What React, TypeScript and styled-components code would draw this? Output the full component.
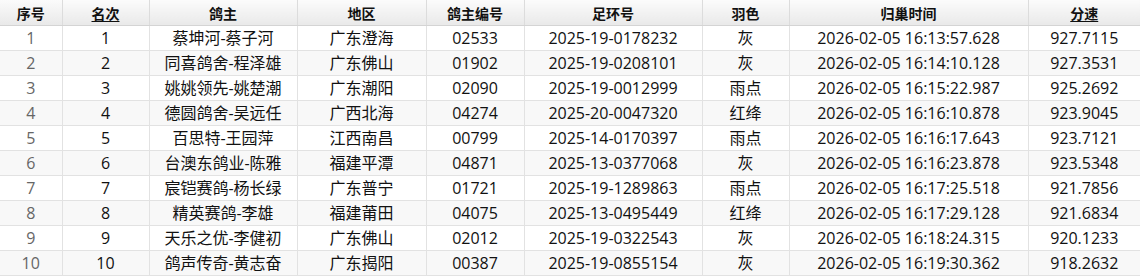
import styled, { createGlobalStyle } from "styled-components";

const GlobalStyle = createGlobalStyle`
  body {
    margin: 0;
    background: #ffffff;
  }
`;

const Table = styled.table`
  width: 1140px;
  table-layout: fixed;
  border-collapse: collapse;
  font-family: "Open Sans", "Noto Sans CJK SC", sans-serif;
  color: #111111;
`;

const Col = styled.col<{ $w: number }>`
  width: ${(p) => p.$w}px;
`;

const HeadCell = styled.th<{ $sortable?: boolean }>`
  height: 25px;
  padding: 0;
  font-size: 14px;
  font-weight: bold;
  color: #111111;
  text-align: center;
  background: linear-gradient(#fbfbfb, #e9e9e9);
  border-right: 1px solid #dcdcdc;
  border-bottom: 1px solid #d4d4d4;
  text-decoration: ${(p) => (p.$sortable ? "underline" : "none")};
  text-underline-offset: 2px;
  &:last-child {
    border-right: none;
  }
`;

const Row = styled.tr`
  &:nth-child(even) {
    background: #f8f8f8;
  }
`;

const Cell = styled.td<{ $muted?: boolean }>`
  height: 24px;
  padding: 0;
  font-size: 16px;
  line-height: 24px;
  text-align: center;
  white-space: nowrap;
  color: ${(p) => (p.$muted ? "#666666" : "#111111")};
  border-right: 1px solid #e2e2e2;
  border-bottom: 1px solid #e2e2e2;
  &:last-child {
    border-right: none;
  }
`;

const columns = [
  { title: "序号", width: 62 },
  { title: "名次", width: 87, sortable: true },
  { title: "鸽主", width: 148 },
  { title: "地区", width: 129 },
  { title: "鸽主编号", width: 98 },
  { title: "足环号", width: 178 },
  { title: "羽色", width: 87 },
  { title: "归巢时间", width: 239 },
  { title: "分速", width: 112, sortable: true },
];

const rows = [
  ["1", "蔡坤河-蔡子河", "广东澄海", "02533", "2025-19-0178232", "灰", "2026-02-05 16:13:57.628", "927.7115"],
  ["2", "同喜鸽舍-程泽雄", "广东佛山", "01902", "2025-19-0208101", "灰", "2026-02-05 16:14:10.128", "927.3531"],
  ["3", "姚姚领先-姚楚潮", "广东潮阳", "02090", "2025-19-0012999", "雨点", "2026-02-05 16:15:22.987", "925.2692"],
  ["4", "德圆鸽舍-吴远任", "广西北海", "04274", "2025-20-0047320", "红绛", "2026-02-05 16:16:10.878", "923.9045"],
  ["5", "百思特-王园萍", "江西南昌", "00799", "2025-14-0170397", "雨点", "2026-02-05 16:16:17.643", "923.7121"],
  ["6", "台澳东鸽业-陈雅", "福建平潭", "04871", "2025-13-0377068", "灰", "2026-02-05 16:16:23.878", "923.5348"],
  ["7", "宸铠赛鸽-杨长绿", "广东普宁", "01721", "2025-19-1289863", "雨点", "2026-02-05 16:17:25.518", "921.7856"],
  ["8", "精英赛鸽-李雄", "福建莆田", "04075", "2025-13-0495449", "红绛", "2026-02-05 16:17:29.128", "921.6834"],
  ["9", "天乐之优-李健初", "广东佛山", "02012", "2025-19-0322543", "灰", "2026-02-05 16:18:24.315", "920.1233"],
  ["10", "鸽声传奇-黄志奋", "广东揭阳", "00387", "2025-19-0855154", "灰", "2026-02-05 16:19:30.362", "918.2632"],
];

export default function App() {
  return (
    <>
      <GlobalStyle />
      <Table>
        <colgroup>
          {columns.map((c) => (
            <Col key={c.title} $w={c.width} />
          ))}
        </colgroup>
        <thead>
          <tr>
            {columns.map((c) => (
              <HeadCell key={c.title} $sortable={c.sortable}>
                {c.title}
              </HeadCell>
            ))}
          </tr>
        </thead>
        <tbody>
          {rows.map((r, i) => (
            <Row key={i}>
              <Cell $muted>{i + 1}</Cell>
              {r.map((v, j) => (
                <Cell key={j}>{v}</Cell>
              ))}
            </Row>
          ))}
        </tbody>
      </Table>
    </>
  );
}
